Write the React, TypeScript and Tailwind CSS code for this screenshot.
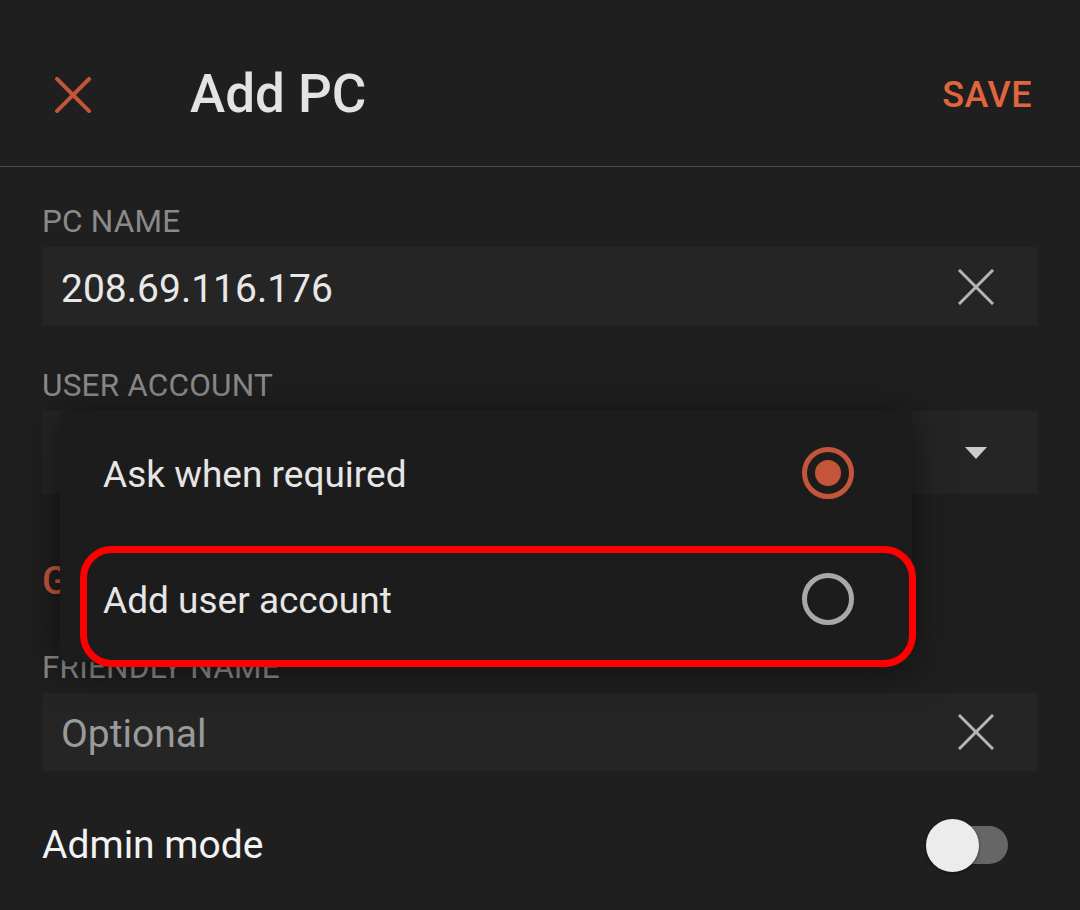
const XIcon = ({ className, stroke }: { className: string; stroke: number }) => (
    <svg viewBox="0 0 36 36" className={className} fill="none" stroke="currentColor" strokeWidth={stroke} strokeLinecap="square">
        <line x1="2" y1="2" x2="34" y2="34" />
        <line x1="34" y1="2" x2="2" y2="34" />
    </svg>
);

const Label = ({ children }: { children: React.ReactNode }) => (
    <div className="text-[31.5px] leading-[40px] text-[#8a8a8a] tracking-[0.2px]">{children}</div>
);

const Radio = ({ on }: { on: boolean }) => (
    <div className={`w-[52px] h-[52px] rounded-full border-[5px] flex items-center justify-center ${on ? "border-[#c4553a]" : "border-[#a8a8a8]"}`}>
        {on && <div className="w-[26px] h-[26px] rounded-full bg-[#c4553a]" />}
    </div>
);

export default function App() {
    return (
        <div className="relative w-[1080px] h-[910px] overflow-hidden bg-[#1f1f1f] font-['Roboto',sans-serif]">
            <header className="flex items-center h-[167px] border-b border-[#4d4d4d] pt-[24px] pl-[55px] pr-[48px]">
                <XIcon className="w-[36px] h-[36px] text-[#c4553a]" stroke={4} />
                <h1 className="ml-[99px] text-[53px] font-medium text-[#e3e3e3]">Add PC</h1>
                <div className="ml-auto text-[36px] font-medium text-[#e0653f] tracking-[0.5px]">SAVE</div>
            </header>

            <div className="px-[42px]">
                <div className="mt-[35px]"><Label>PC NAME</Label></div>
                <div className="mt-[5px] h-[79px] bg-[#252525] flex items-center pl-[19px] pr-[44px]">
                    <span className="pt-[6px] text-[39px] text-[#e8e8e8]">208.69.116.176</span>
                    <XIcon className="ml-auto w-[36px] h-[36px] text-[#b5b5b5]" stroke={3} />
                </div>

                <div className="mt-[40px]"><Label>USER ACCOUNT</Label></div>
                <div className="mt-[5px] h-[83px] bg-[#252525] flex items-center justify-end pr-[51px]">
                    <svg viewBox="0 0 22 12" className="w-[22px] h-[12px] text-[#cccccc]"><path d="M0 0h22L11 12z" fill="currentColor" /></svg>
                </div>

                <div className="mt-[62px] h-[50px] flex items-center text-[38px] font-medium text-[#c8583c]">GENERAL</div>

                <div className="mt-[42px]"><Label>FRIENDLY NAME</Label></div>
                <div className="mt-[5px] h-[78px] bg-[#252525] flex items-center pl-[19px] pr-[44px]">
                    <span className="pt-[4px] text-[39px] text-[#9a9a9a]">Optional</span>
                    <XIcon className="ml-auto w-[36px] h-[36px] text-[#b5b5b5]" stroke={3} />
                </div>

                <div className="mt-[30px] h-[88px] flex items-center">
                    <span className="text-[39px] text-[#f2f2f2]">Admin mode</span>
                    <div className="ml-auto mr-[30px] relative w-[82px] h-[53px] flex items-center">
                        <div className="ml-auto w-[74px] h-[38px] rounded-full bg-[#666666]" />
                        <div className="absolute left-0 top-0 w-[53px] h-[53px] rounded-full bg-[#ececec] shadow-[0_1px_3px_rgba(0,0,0,0.5)]" />
                    </div>
                </div>
            </div>

            {/* dropdown menu */}
            <div className="absolute left-[60px] top-[410px] w-[852px] bg-[#1c1c1c] rounded-[8px] shadow-[0_6px_40px_rgba(0,0,0,0.55)]">
                <div className="h-[126px] flex items-center pl-[43px] pr-[58px]">
                    <span className="pt-[4px] text-[37px] text-[#e6e6e6]">Ask when required</span>
                    <div className="ml-auto"><Radio on={true} /></div>
                </div>
                <div className="h-[126px] flex items-center pl-[43px] pr-[58px]">
                    <span className="pt-[4px] text-[37px] text-[#e6e6e6]">Add user account</span>
                    <div className="ml-auto"><Radio on={false} /></div>
                </div>
            </div>

            {/* highlight */}
            <div className="absolute left-[80px] top-[546px] w-[836px] h-[121px] border-[7px] border-[#ff0000] rounded-[32px]" />
        </div>
    );
}
